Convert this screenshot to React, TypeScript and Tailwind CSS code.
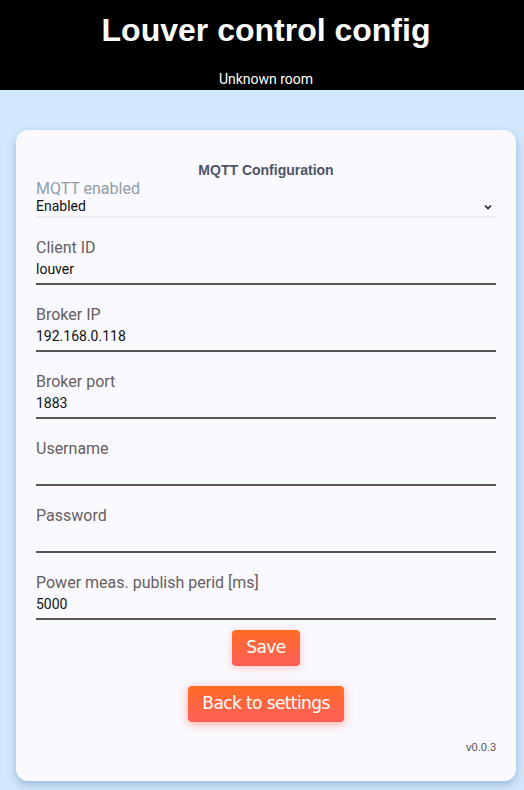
import React from 'react';

const fields = [
  { label: 'Client ID', value: 'louver' },
  { label: 'Broker IP', value: '192.168.0.118' },
  { label: 'Broker port', value: '1883' },
  { label: 'Username', value: '' },
  { label: 'Password', value: '' },
  { label: 'Power meas. publish perid [ms]', value: '5000' },
];

export default function App() {
  return (
    <div className="min-h-[790px] bg-[#d3e8fd] font-['Roboto',sans-serif]">
      {/* Header */}
      <div className="bg-black h-[90px] flex flex-col items-center text-white pl-2">
        <h1 className="font-['Liberation_Sans',Arial,sans-serif] font-bold text-[32px] leading-none mt-[14px]">
          Louver control config
        </h1>
        <p className="text-[14px] leading-none mt-[26px]">Unknown room</p>
      </div>

      {/* Card */}
      <div className="pl-4 pr-2 pt-10 pb-[10px]">
        <div className="bg-[#f9f9fe] rounded-xl shadow-[0_4px_10px_rgba(90,130,170,0.45)] px-5 pt-[33px] pb-[25px]">
          <h2 className="text-center font-['Liberation_Sans',Arial,sans-serif] font-bold text-[14px] leading-none text-[#4c5566]">
            MQTT Configuration
          </h2>

          {/* Select */}
          <div className="mt-[3px]">
            <div className="text-[16px] leading-[18px] text-[#8f9ea9]">MQTT enabled</div>
            <div className="flex items-center justify-between border-b-2 border-[#eeeeee] h-[20px] text-[14px] text-[#111]">
              <span className="leading-none -mt-[2px]">Enabled</span>
              <svg width="10" height="10" viewBox="0 0 10 10" className="mr-[3px] -mt-[1px]">
                <path d="M2 3.5 L5 6.5 L8 3.5" fill="none" stroke="#222" strokeWidth="1.6" />
              </svg>
            </div>
          </div>

          {/* Text fields */}
          {fields.map((f) => (
            <div key={f.label} className="mt-[20px]">
              <div className="text-[16px] leading-[20px] text-[#675e5e]">{f.label}</div>
              <div className="border-b-2 border-[#5e5353] h-[27px] text-[14px] leading-[20px] text-[#111] pt-[1px]">
                {f.value}
              </div>
            </div>
          ))}

          {/* Buttons */}
          <div className="flex flex-col items-center mt-[10px]">
            <button className="h-9 px-[14px] rounded bg-gradient-to-b from-[#ff6c20] to-[#ff5e55] text-white text-[17px] font-['DejaVu_Sans',Tahoma,sans-serif] shadow-[0_2px_8px_rgba(255,110,90,0.35)] tracking-[-0.6px]">
              Save
            </button>
            <button className="mt-5 h-9 px-[14px] rounded bg-gradient-to-b from-[#ff6c20] to-[#ff5e55] text-white text-[17px] font-['DejaVu_Sans',Tahoma,sans-serif] shadow-[0_2px_10px_rgba(255,90,80,0.5)] tracking-[-0.6px]">
              Back to settings
            </button>
          </div>

          <div className="text-right text-[11px] text-[#555] font-['Liberation_Sans',Arial,sans-serif] mt-[17px]">
            v0.0.3
          </div>
        </div>
      </div>
    </div>
  );
}
